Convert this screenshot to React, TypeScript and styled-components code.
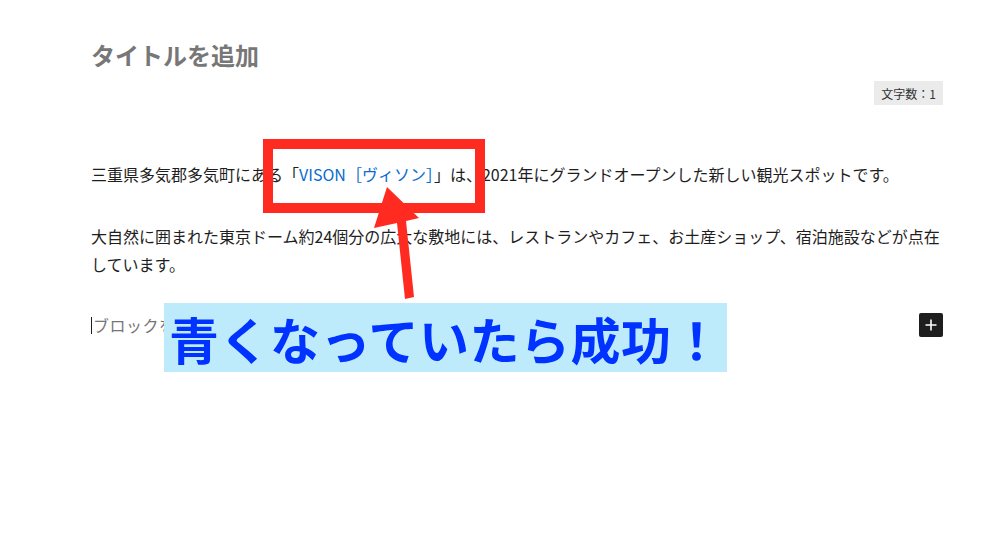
import React from "react";
import styled, { createGlobalStyle } from "styled-components";

const GlobalStyle = createGlobalStyle`
  html, body {
    margin: 0;
    padding: 0;
    background: #ffffff;
  }
  body {
    font-family: "Noto Sans CJK JP", "Noto Sans", sans-serif;
    color: #1e1e1e;
  }
`;

const palette = {
  text: "#1e1e1e",
  placeholder: "#757575",
  link: "#0a6ccf",
  red: "#ff2a20",
  bannerBg: "#bdebfb",
  bannerText: "#0033ff",
};

function App() {
  return (
    <Page>
      <GlobalStyle />
      <Editor>
        <Title>タイトルを追加</Title>
        <CountRow>
          <WordCount>文字数：1</WordCount>
        </CountRow>
        <Paragraph>
          三重県多気郡多気町にある「<Link>VISON［ヴィソン］</Link>
          」は、2021年にグランドオープンした新しい観光スポットです。
        </Paragraph>
        <Paragraph>
          大自然に囲まれた東京ドーム約24個分の広大な敷地には、レストランやカフェ、お土産ショップ、宿泊施設などが点在しています。
        </Paragraph>
        <BlockRow>
          <Placeholder>
            <Caret />
            <PlaceholderText>ブロックを選択するには「/」を入力</PlaceholderText>
          </Placeholder>
          <AddButton aria-label="ブロックを追加">
            <svg width="14" height="14" viewBox="0 0 14 14">
              <path d="M7 1.5v11M1.5 7h11" stroke="#fff" strokeWidth="1.6" />
            </svg>
          </AddButton>
        </BlockRow>
      </Editor>

      <Highlight />
      <Arrow width="1007" height="544" viewBox="0 0 1007 544">
        <polygon
          points="387,187 374,228 397,223 405,299 414,297 406,221 419,218"
          fill={palette.red}
        />
      </Arrow>
      <Banner>青くなっていたら成功！</Banner>
    </Page>
  );
}

const Page = styled.div`
  position: relative;
  width: 1007px;
  height: 544px;
  overflow: hidden;
`;

const Editor = styled.div`
  display: flex;
  flex-direction: column;
  width: 852px;
  padding: 40px 0 0 91px;
`;

const Title = styled.h1`
  margin: 0;
  font-size: 24px;
  line-height: 29px;
  font-weight: 700;
  color: #777777;
`;

const CountRow = styled.div`
  display: flex;
  justify-content: flex-end;
  margin-top: 12px;
`;

const WordCount = styled.span`
  display: flex;
  align-items: center;
  height: 24px;
  padding: 0 7px;
  background: #ebebeb;
  color: #333333;
  font-size: 12px;
`;

const Paragraph = styled.p`
  margin: 0;
  font-size: 16px;
  line-height: 28px;
  color: ${palette.text};
  margin-top: 55px;

  & + & {
    margin-top: 34px;
  }
`;

const Link = styled.span`
  color: ${palette.link};
`;

const BlockRow = styled.div`
  display: flex;
  align-items: center;
  justify-content: space-between;
  height: 28px;
  margin-top: 33px;
`;

const Placeholder = styled.div`
  display: flex;
  align-items: center;
  font-size: 16px;
  color: ${palette.placeholder};
  letter-spacing: 0.5px;
`;

/* the annotation banner hides the rest of the placeholder */
const PlaceholderText = styled.span`
  display: block;
  width: 71px;
  overflow: hidden;
  white-space: nowrap;
`;

const Caret = styled.span`
  width: 1px;
  height: 17px;
  margin-right: 1px;
  background: #1e1e1e;
`;

const AddButton = styled.button`
  display: flex;
  align-items: center;
  justify-content: center;
  width: 24px;
  height: 24px;
  padding: 0;
  border: none;
  border-radius: 2px;
  background: #1e1e1e;
`;

const Highlight = styled.div`
  position: absolute;
  left: 263px;
  top: 139px;
  width: 222px;
  height: 74px;
  box-sizing: border-box;
  border: 10px solid ${palette.red};
`;

const Arrow = styled.svg`
  position: absolute;
  left: 0;
  top: 0;
  pointer-events: none;
`;

const Banner = styled.div`
  position: absolute;
  left: 164px;
  top: 303px;
  width: 563px;
  height: 69px;
  box-sizing: border-box;
  display: flex;
  align-items: center;
  padding-left: 5px;
  background: ${palette.bannerBg};
  color: ${palette.bannerText};
  font-size: 50px;
  font-weight: 700;
  letter-spacing: 0.5px;
  white-space: nowrap;
`;

export default App;
